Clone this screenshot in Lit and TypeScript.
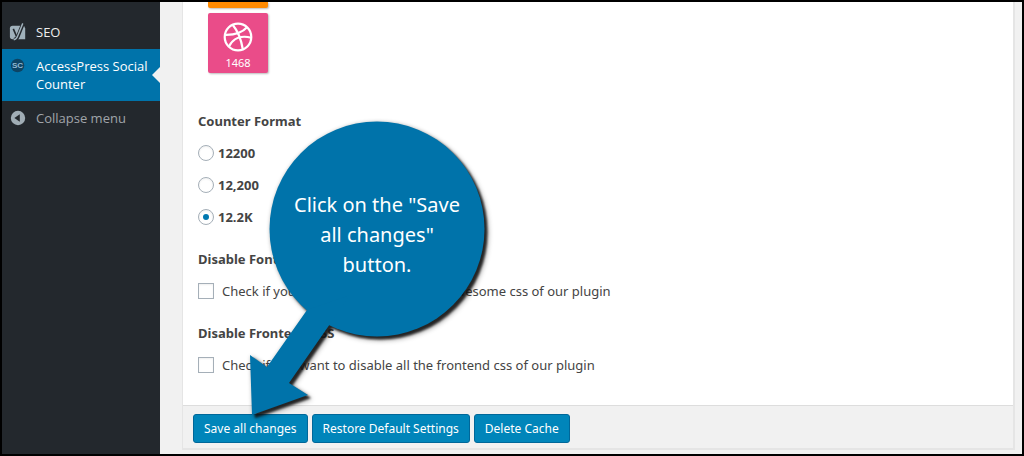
import { LitElement, html, css, svg } from "lit";
import { customElement, property, state } from "lit/decorators.js";

const seoIcon = svg`
  <svg viewBox="0 0 20 20" width="20" height="20" aria-hidden="true">
    <path fill="#a0b1bb" d="M4 3h11l2 .5L18 6v12H4a3 3 0 0 1-3-3V6a3 3 0 0 1 3-3z"/>
    <path fill="none" stroke="#23282d" stroke-width="1.800" d="M4.800 6.500l3.400 8"/>
    <path fill="none" stroke="#23282d" stroke-width="4" d="M15.600.600L9.800 15c-.8 2-1.900 3.400-4.400 3.600"/>
    <path fill="none" stroke="#a0b1bb" stroke-width="1.600" d="M15.300.400L9.500 14.800c-.8 2.200-1.900 3.500-4.200 3.800"/>
  </svg>`;

const counterIcon = svg`
  <svg viewBox="0 0 20 20" width="20" height="20" aria-hidden="true">
    <circle cx="9.500" cy="9.500" r="7.500" fill="#0d4464"/>
    <text x="9.500" y="12.500" text-anchor="middle" font-family="Liberation Sans, sans-serif" font-size="9" font-weight="700" fill="#8fb9d3">SC</text>
  </svg>`;

const collapseIcon = svg`
  <svg viewBox="0 0 20 20" width="20" height="20" aria-hidden="true">
    <circle cx="10" cy="10" r="8" fill="#a0adb5"/>
    <path fill="#23282d" d="M12 5.800v8.400L6 10z"/>
  </svg>`;

const dribbbleIcon = svg`
  <svg viewBox="0 0 30 30" width="30" height="30" aria-hidden="true" fill="none" stroke="#fff" stroke-width="2.200">
    <circle cx="15" cy="15" r="13.300"/>
    <path d="M9.800 3C14 8 18 16.500 19.800 27.300"/>
    <path d="M2 12.800C10.500 13 19 11 24 5.300"/>
    <path d="M6 24.500C10 16.500 18 13 28.200 15.800"/>
  </svg>`;

@customElement("side-menu")
class SideMenu extends LitElement {
  static styles = css`
    :host {
      display: block;
      flex: none;
      width: 158px;
      padding-top: 13px;
      box-sizing: border-box;
      background: #23282d;
      font: 13px/18px "Open Sans", "Noto Sans", sans-serif;
    }
    .item {
      position: relative;
      display: flex;
      gap: 8px;
      width: 100%;
      padding: 8px 0 8px 6px;
      box-sizing: border-box;
      border: 0;
      background: none;
      color: #eee;
      font: inherit;
      text-align: left;
      text-decoration: none;
    }
    .item svg {
      flex: none;
      height: 18px;
    }
    .current {
      background: #0073aa;
      color: #fff;
    }
    .current::after {
      content: "";
      position: absolute;
      right: 0;
      top: 50%;
      margin-top: -8px;
      border: 8px solid transparent;
      border-left: 0;
      border-right-color: #f1f1f1;
    }
    .collapse {
      color: #a0a5aa;
    }
  `;

  render() {
    return html`
      <nav>
        <a class="item" href="#seo">${seoIcon}<span>SEO</span></a>
        <a class="item current" href="#counter" aria-current="page">${counterIcon}<span>AccessPress Social Counter</span></a>
        <button class="item collapse" type="button">${collapseIcon}<span>Collapse menu</span></button>
      </nav>
    `;
  }
}

@customElement("counter-settings")
class CounterSettings extends LitElement {
  @state() private format = "12.2K";

  static styles = css`
    :host {
      display: block;
      box-sizing: border-box;
      border: 2px solid #e5e5e5;
      border-width: 0 2px 2px 1px;
      background: #fff;
      color: #444;
      font: 13px/32px "Noto Sans", "Open Sans", sans-serif;
    }
    .body {
      padding: 0 15px 24px;
    }
    .tiles {
      display: grid;
      width: 60px;
      gap: 5px;
      margin-left: 10px;
      padding-bottom: 32px;
    }
    .tile {
      display: flex;
      flex-direction: column;
      align-items: center;
      gap: 3px;
      padding: 9px 0 2px;
      border-radius: 2px;
      box-shadow: 1px 1px 2px #0004;
      background: #ea4c89;
      color: #fff;
      font-size: 11px;
      line-height: 16px;
    }
    .tile-cut {
      padding: 3px 0;
      border-radius: 0 0 2px 2px;
      background: #ff8a00;
    }
    fieldset {
      margin: 0 0 10px;
      padding: 0;
      border: 0;
    }
    fieldset:last-child {
      margin-bottom: 0;
    }
    legend {
      padding: 0;
      font-weight: 700;
    }
    .option {
      display: flex;
      align-items: center;
      gap: 8px;
    }
    .radio {
      gap: 4px;
      font-weight: 700;
    }
    input {
      appearance: none;
      flex: none;
      display: grid;
      place-items: center;
      width: 16px;
      height: 16px;
      margin: 0;
      box-sizing: border-box;
      border: 1px solid #a5afb8;
      background: #fff;
      box-shadow: inset 0 1px 2px #0001;
    }
    input[type="radio"] {
      border-radius: 50%;
    }
    input[type="radio"]:checked::before {
      content: "";
      width: 6px;
      height: 6px;
      border-radius: 50%;
      background: #0078b0;
    }
    .actions {
      display: flex;
      flex-wrap: wrap;
      gap: 4px;
      padding: 8px 10px 5px;
      border-top: 1px solid #ddd;
      background: #f1f1f1;
    }
    .action {
      padding: 0 10px;
      border: 1px solid #006799;
      border-radius: 3px;
      background: #0085ba;
      color: #fff;
      font: 12px/27px "Noto Sans", "Open Sans", sans-serif;
    }
  `;

  render() {
    return html`
      <form @submit=${(e: Event) => e.preventDefault()}>
        <div class="body">
          <div class="tiles">
            <div class="tile tile-cut"></div>
            <div class="tile">${dribbbleIcon}<span>1468</span></div>
          </div>
          <fieldset>
            <legend>Counter Format</legend>
            ${["12200", "12,200", "12.2K"].map(
              (value) => html`
                <label class="option radio">
                  <input type="radio" name="format" .value=${value}
                    .checked=${this.format === value}
                    @change=${() => (this.format = value)} />
                  ${value}
                </label>
              `
            )}
          </fieldset>
          <fieldset>
            <legend>Disable Font Awesome</legend>
            <label class="option">
              <input type="checkbox" name="font" />
              Check if you want to disable the font awesome css of our plugin
            </label>
          </fieldset>
          <fieldset>
            <legend>Disable Frontend CSS</legend>
            <label class="option">
              <input type="checkbox" name="frontend" />
              Check if you want to disable all the frontend css of our plugin
            </label>
          </fieldset>
        </div>
        <div class="actions">
          <button class="action" type="submit">Save all changes</button>
          <button class="action" type="button">Restore Default Settings</button>
          <button class="action" type="button">Delete Cache</button>
        </div>
      </form>
    `;
  }
}

@customElement("hint-callout")
class HintCallout extends LitElement {
  @property() text = "";

  static styles = css`
    :host {
      display: block;
      width: 260px;
      height: 316px;
      pointer-events: none;
    }
    .shape {
      position: absolute;
      inset: 0;
      filter: drop-shadow(3px 3px 1px #111d) drop-shadow(1px 1px 2px #0006);
    }
    .message {
      position: absolute;
      left: 45px;
      top: 75px;
      width: 184px;
      margin: 0;
      color: #fff;
      font: 20px/30px "Noto Sans", "Open Sans", sans-serif;
      text-align: center;
    }
  `;

  render() {
    return html`
      <svg class="shape" viewBox="0 0 260 316" width="260" height="316" aria-hidden="true">
        <circle cx="137" cy="114" r="107.500" fill="#0073aa"/>
        <path fill="#0073aa" d="M67 195L27 252 10 240 12 300 68 280 49 268 90 209 110 180z"/>
      </svg>
      <p class="message">${this.text}</p>
    `;
  }
}

@customElement("app-root")
class AppRoot extends LitElement {
  static styles = css`
    :host {
      display: block;
      background: #f1f1f1;
    }
    .frame {
      position: relative;
      display: flex;
      min-height: 100vh;
      box-sizing: border-box;
      border: 2px solid #000;
    }
    main {
      flex: 1;
      min-width: 0;
      padding: 0 7px 4px 22px;
    }
    .hint {
      position: absolute;
      left: 238px;
      top: 113px;
    }
  `;

  render() {
    return html`
      <div class="frame">
        <side-menu></side-menu>
        <main><counter-settings></counter-settings></main>
        <hint-callout class="hint" text='Click on the "Save all changes" button.'></hint-callout>
      </div>
    `;
  }
}
